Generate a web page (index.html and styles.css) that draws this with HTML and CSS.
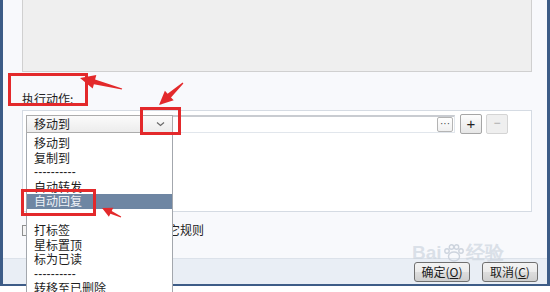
FILE: index.html
```html
<!DOCTYPE html>
<html lang="zh">
<head>
<meta charset="utf-8">
<link rel="stylesheet" href="styles.css">
</head>
<body>
<div class="window">
  <div class="content">
    <div class="preview"></div>
    <div class="label">执行动作:</div>
    <div class="panel">
      <div class="row">
        <div class="combo"><span>移动到</span><svg class="chev" width="9" height="6" viewBox="0 0 9 6"><path d="M1 1.5 L4.5 4.5 L8 1.5" fill="none" stroke="#6a6a6a" stroke-width="1.2"/></svg></div>
        <div class="input"><span class="dots">···</span></div>
        <div class="btn plus">+</div>
        <div class="btn minus">−</div>
      </div>
    </div>
    <div class="check-row">
      <span class="checkbox"></span>
      <span class="check-text">不再执行其它规则</span>
    </div>
  </div>
  <div class="footer">
    <div class="dlg-btn">确定(<u>O</u>)</div>
    <div class="dlg-btn">取消(<u>C</u>)</div>
  </div>
</div>

<div class="watermark">Bai<svg width="24" height="18" viewBox="0 0 24 18"><g fill="none" stroke="#cdd4de" stroke-width="1.4"><ellipse cx="12" cy="12.5" rx="5.5" ry="4.5"/><circle cx="5" cy="7" r="2.2"/><circle cx="9.5" cy="3" r="2.2"/><circle cx="14.5" cy="3" r="2.2"/><circle cx="19" cy="7" r="2.2"/></g></svg>经验</div>

<div class="dropdown">
  <div class="item">移动到</div>
  <div class="item">复制到</div>
  <div class="item sep">----------</div>
  <div class="item">自动转发</div>
  <div class="item selected">自动回复</div>
  <div class="item"></div>
  <div class="item">打标签</div>
  <div class="item">星标置顶</div>
  <div class="item">标为已读</div>
  <div class="item sep">----------</div>
  <div class="item">转移至已删除</div>
</div>

<div class="mark mark1"></div>
<div class="mark mark2"></div>
<div class="mark mark3"></div>
<svg class="arrows" width="550" height="292" viewBox="0 0 550 292">
  <g fill="#e3292b">
    <polygon points="80,78 96.3,75 95.1,79.4 122.2,88.4 121.8,89.6 93.9,84.2 92.7,88.6"/>
    <polygon points="159,105 173.7,100.3 171,97.4 183.4,83.4 182.6,82.6 167.6,93.7 164.9,90.8"/>
    <polygon points="102,208 113.2,207.8 111.7,210.9 121.2,216.5 120.8,217.5 110.4,213.7 108.9,216.8"/>
  </g>
</svg>
</body>
</html>
```

FILE: styles.css
```css
html, body {
  margin: 0;
  padding: 0;
}
body {
  width: 550px;
  height: 292px;
  overflow: hidden;
  position: relative;
  background: #ffffff;
  font-family: "Noto Sans CJK SC", "Noto Sans", sans-serif;
  font-size: 12px;
  color: #1e1e1e;
}
.window {
  width: 550px;
  height: 286px;
  box-sizing: border-box;
  border-left: 3px solid #3d5c87;
  border-right: 3px solid #3d5c87;
  border-bottom: 2px solid #3d5c87;
  background: #f8f9fc;
  display: flex;
  flex-direction: column;
}
.content {
  padding: 0 15px 0 19px;
}
.preview {
  height: 72px;
  box-sizing: border-box;
  background: #efefef;
  border: 1px solid #d0d0d0;
  border-top: none;
}
.label {
  margin-top: 20px;
  height: 14px;
  line-height: 14px;
  color: #222;
}
.panel {
  margin-top: 4px;
  height: 102px;
  box-sizing: border-box;
  border: 1px solid #d5dbe3;
  background: #ffffff;
  padding: 4px 3px;
}
.row {
  display: flex;
  align-items: center;
  height: 18px;
}
.combo {
  width: 147px;
  height: 18px;
  box-sizing: border-box;
  border: 1px solid #acacac;
  background: linear-gradient(#fbfbfb, #ececec);
  display: flex;
  align-items: center;
  justify-content: space-between;
  padding: 0 7px 0 7px;
  line-height: 16px;
}
.chev {
  display: block;
}
.input {
  width: 282px;
  height: 18px;
  box-sizing: border-box;
  border: 1px solid #e1e6ec;
  border-top: 2px solid #c9ccd1;
  border-left: none;
  background: #fff;
  display: flex;
  justify-content: flex-end;
  align-items: center;
  padding-right: 1px;
}
.dots {
  width: 16px;
  height: 15px;
  box-sizing: border-box;
  border: 1px solid #b4b4b4;
  border-radius: 2px;
  font-family: "Liberation Sans", sans-serif;
  font-size: 10px;
  line-height: 11px;
  text-align: center;
  color: #444;
  background: linear-gradient(#ffffff, #f0f0f0);
}
.btn {
  width: 22px;
  height: 20px;
  box-sizing: border-box;
  border: 1px solid #a6a6a6;
  border-radius: 2px;
  background: linear-gradient(#fdfdfd, #e6e6e6);
  font-family: "Liberation Sans", sans-serif;
  font-size: 15px;
  line-height: 17px;
  text-align: center;
  color: #222;
}
.plus {
  margin-left: 5px;
}
.minus {
  margin-left: 4px;
  border-color: #d4d4d4;
  background: #efefef;
  color: #a8a8a8;
  font-size: 12px;
}
.check-row {
  margin-top: 11px;
  height: 14px;
  display: flex;
  align-items: center;
}
.checkbox {
  width: 11px;
  height: 11px;
  box-sizing: border-box;
  border: 1px solid #8e8f8f;
  background: #f4f4f4;
}
.check-text {
  margin-left: 75px;
  line-height: 14px;
  color: #222;
}
.footer {
  margin-top: auto;
  height: 26px;
  box-sizing: border-box;
  border-top: 1px solid #dce2ea;
  background: #e9eef5;
  display: flex;
  justify-content: flex-end;
  align-items: center;
  gap: 12px;
  padding-right: 9px;
}
.dlg-btn {
  width: 56px;
  height: 20px;
  box-sizing: border-box;
  border: 1px solid #707070;
  border-radius: 3px;
  background: linear-gradient(#f3f3f3 0%, #ebebeb 50%, #dddddd 51%, #cfcfcf 100%);
  text-align: center;
  line-height: 18px;
  font-size: 12px;
  color: #1a1a1a;
}
.watermark {
  position: absolute;
  left: 412px;
  top: 243px;
  display: flex;
  align-items: center;
  font-family: "Liberation Sans", sans-serif;
  font-size: 19px;
  font-weight: bold;
  color: rgba(205, 213, 223, 0.7);
  line-height: 19px;
}
.dropdown {
  position: absolute;
  left: 26px;
  top: 133px;
  width: 147px;
  height: 159px;
  overflow: hidden;
  box-sizing: border-box;
  border-left: 1px solid #a3a7ad;
  border-right: 1px solid #a3a7ad;
  background: #ffffff;
  padding-top: 3px;
}
.item {
  height: 14.5px;
  line-height: 14.5px;
  padding-left: 7px;
  color: #1e1e1e;
  white-space: nowrap;
}
.item.sep {
  font-family: "Liberation Sans", sans-serif;
  letter-spacing: 0.2px;
}
.item.selected {
  background: #6e86a3;
  color: #eef2f7;
}
.mark {
  position: absolute;
  border: 3px solid #e3292b;
  box-sizing: border-box;
}
.mark1 {
  left: 8px;
  top: 73px;
  width: 80px;
  height: 33px;
}
.mark2 {
  left: 140px;
  top: 107px;
  width: 41px;
  height: 28px;
}
.mark3 {
  left: 21px;
  top: 189px;
  width: 75px;
  height: 27px;
}
.arrows {
  position: absolute;
  left: 0;
  top: 0;
}
```
